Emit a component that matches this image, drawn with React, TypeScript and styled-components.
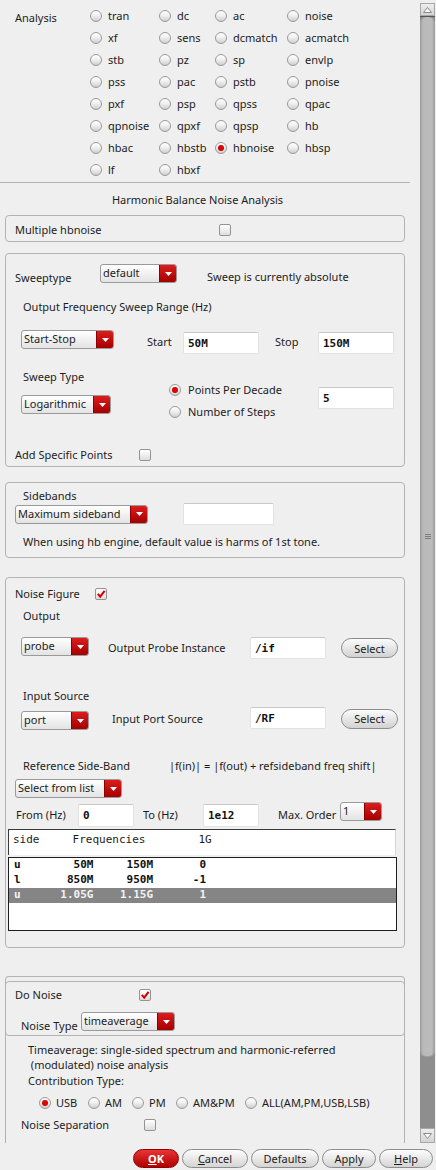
import React from 'react'
import styled, { createGlobalStyle } from 'styled-components'

const GlobalStyle = createGlobalStyle`
  html, body {
    margin: 0;
    padding: 0;
    background: #efefef;
  }
  body {
    font-family: "Noto Sans", "DejaVu Sans", sans-serif;
    font-size: 11px;
    line-height: 14px;
    color: #1c1c1c;
  }
  * {
    box-sizing: border-box;
  }
`

const Window = styled.div`
  width: 436px;
  height: 1170px;
  display: flex;
  flex-direction: column;
  background: #efefef;
  overflow: hidden;
`

const MainRow = styled.div`
  display: flex;
  height: 1143px;
  flex-shrink: 0;
`

const Panel = styled.div`
  width: 420px;
  height: 100%;
  overflow: hidden;
`

/* scrollbar */

const Scrollbar = styled.div`
  width: 15px;
  padding-top: 3px;
  display: flex;
  flex-direction: column;
`

const ScrollArrow = styled.div<{ $h: number }>`
  height: ${p => p.$h}px;
  flex-shrink: 0;
  background: linear-gradient(#ededed, #d4d4d4);
  border: 1px solid #a8a8a8;
  display: flex;
  align-items: center;
  justify-content: center;
`

const ScrollTrack = styled.div`
  flex: 1;
  background: #8e8e8e;
  border-top: 1px solid #555;
`

const ScrollThumb = styled.div`
  height: 1040px;
  background: linear-gradient(90deg, #a9a9a9, #bababa 20%, #bcbcbc 80%, #a9a9a9);
  border: 1px solid #9e9e9e;
  border-top: none;
  border-radius: 6px;
  display: flex;
  align-items: center;
  justify-content: center;
`

const Grip = styled.div`
  width: 6px;
  height: 5px;
  background: repeating-linear-gradient(#7c7c7c 0 1px, transparent 1px 2px);
`

/* analysis chooser */

const AnalysisSection = styled.div`
  display: flex;
  height: 181px;
  padding-top: 5px;
`

const AnalysisLabel = styled.div`
  width: 90px;
  padding: 6px 0 0 15px;
  flex-shrink: 0;
`

const RadioGrid = styled.div`
  display: grid;
  grid-template-columns: 69px 56px 72px 100px;
  grid-auto-rows: 22px;
`

const RadioOption = styled.label<{ $w?: number; $gap?: number }>`
  display: flex;
  align-items: center;
  gap: ${p => p.$gap ?? 6}px;
  height: 22px;
  white-space: nowrap;
  flex-shrink: 0;
  width: ${p => (p.$w ? `${p.$w}px` : 'auto')};
`

const RadioCircle = styled.span<{ $checked?: boolean }>`
  width: 12px;
  height: 12px;
  border-radius: 50%;
  border: 1px solid #9a9a9a;
  background: linear-gradient(#ffffff, #f0f0f0 45%, #cfcfcf);
  flex-shrink: 0;
  display: flex;
  align-items: center;
  justify-content: center;

  &::after {
    content: '';
    display: ${p => (p.$checked ? 'block' : 'none')};
    width: 6px;
    height: 6px;
    border-radius: 50%;
    background: radial-gradient(#e60000 40%, #a40000);
  }
`

const Separator = styled.div`
  margin-top: 1px;
  width: 410px;
  height: 1px;
  background: #b4b4b4;
`

const Title = styled.div`
  margin-top: 10px;
  width: 395px;
  text-align: center;
`

/* group boxes and rows */

const GroupBox = styled.div<{ $mt: number; $pb?: number }>`
  margin: ${p => p.$mt}px 0 0 5px;
  width: 400px;
  border: 1px solid #b3b3b3;
  border-radius: 4px;
  padding-bottom: ${p => p.$pb ?? 0}px;
`

const OpenBox = styled.div<{ $mt: number }>`
  margin: ${p => p.$mt}px 0 0 5px;
  width: 400px;
  border: 1px solid #b3b3b3;
  border-bottom: none;
  border-radius: 4px 4px 0 0;
  padding-bottom: 30px;
`

const InnerBox = styled.div`
  margin: 4px -1px 0;
  border: 1px solid #b3b3b3;
  border-radius: 4px;
  padding-bottom: 4px;
`

const Row = styled.div<{ $mt?: number; $h?: number; $pl?: number; $align?: string }>`
  display: flex;
  align-items: ${p => p.$align ?? 'center'};
  margin-top: ${p => p.$mt ?? 0}px;
  height: ${p => (p.$h ? `${p.$h}px` : 'auto')};
  padding-left: ${p => p.$pl ?? 0}px;
`

const Column = styled.div<{ $w?: number; $mt?: number }>`
  display: flex;
  flex-direction: column;
  align-items: flex-start;
  width: ${p => (p.$w ? `${p.$w}px` : 'auto')};
  margin-top: ${p => p.$mt ?? 0}px;
  flex-shrink: 0;
`

const Label = styled.span<{ $w?: number; $ml?: number; $mt?: number }>`
  flex-shrink: 0;
  white-space: nowrap;
  width: ${p => (p.$w ? `${p.$w}px` : 'auto')};
  margin-left: ${p => p.$ml ?? 0}px;
  margin-top: ${p => p.$mt ?? 0}px;
`

const Caption = styled.div<{ $mt?: number; $pl?: number; $lh?: number }>`
  margin-top: ${p => p.$mt ?? 0}px;
  padding-left: ${p => p.$pl ?? 0}px;
  line-height: ${p => p.$lh ?? 14}px;
  white-space: pre;
`

/* widgets */

const CheckBoxBox = styled.span`
  width: 12px;
  height: 12px;
  flex-shrink: 0;
  border: 1px solid #939393;
  border-radius: 2px;
  background: linear-gradient(#ffffff, #dddddd);
  display: flex;
  align-items: center;
  justify-content: center;
`

const ComboBox = styled.div<{ $w: number; $self?: string; $mt?: number }>`
  width: ${p => p.$w}px;
  height: 19px;
  flex-shrink: 0;
  display: flex;
  align-self: ${p => p.$self ?? 'auto'};
  margin-top: ${p => p.$mt ?? 0}px;
  border: 1px solid #9a9a9a;
  border-radius: 3px;
  background: linear-gradient(#ffffff, #e3e3e3);
  overflow: hidden;
`

const ComboText = styled.span`
  flex: 1;
  padding-left: 2px;
  line-height: 15px;
  white-space: nowrap;
  overflow: hidden;
`

const ComboArrow = styled.span`
  width: 17px;
  flex-shrink: 0;
  background: linear-gradient(#dc1d1d, #a50000);
  border-left: 1px solid #8c0000;
  display: flex;
  align-items: center;
  justify-content: center;
`

const TextField = styled.input<{ $w: number; $h?: number; $self?: string; $ml?: number; $mt?: number }>`
  width: ${p => p.$w}px;
  height: ${p => p.$h ?? 22}px;
  flex-shrink: 0;
  align-self: ${p => p.$self ?? 'auto'};
  margin: ${p => p.$mt ?? 0}px 0 0 ${p => p.$ml ?? 0}px;
  padding: 0 0 0 4px;
  border: 1px solid #e2e2e2;
  border-top-color: #c8c8c8;
  border-radius: 2px;
  background: #fff;
  font: bold 11px "DejaVu Sans Mono", monospace;
  color: #111;
  outline: none;
`

const SelectButton = styled.button`
  width: 57px;
  height: 20px;
  margin-left: 15px;
  padding: 0;
  flex-shrink: 0;
  border: 1px solid #8d8d8d;
  border-radius: 10px;
  background: linear-gradient(#fbfbfb, #d2d2d2);
  font: 11px "Noto Sans", sans-serif;
  color: #1c1c1c;
`

const TableHeader = styled.div`
  margin: 2px 0 0 2px;
  width: 388px;
  height: 26px;
  padding: 2px 0 0 4px;
  background: #fff;
  border-top: 1px solid #3a3a3a;
  border-left: 1px solid #3a3a3a;
  border-right: 1px solid #d4d4d4;
  font: 11px "DejaVu Sans Mono", monospace;
  line-height: 15px;
  white-space: pre;
`

const ListBox = styled.div`
  margin: 2px 0 0 2px;
  width: 389px;
  height: 74px;
  background: #fff;
  border: 1px solid #1e1e1e;
`

const ListRow = styled.div<{ $selected?: boolean }>`
  height: 15px;
  line-height: 15px;
  padding-left: 5px;
  white-space: pre;
  font: bold 11px "DejaVu Sans Mono", monospace;
  background: ${p => (p.$selected ? '#858585' : 'transparent')};
  color: ${p => (p.$selected ? '#f2f2f2' : '#111')};
`

/* dialog buttons */

const ButtonBar = styled.div`
  flex: 1;
  display: flex;
  justify-content: flex-end;
  align-items: flex-start;
  gap: 3px;
  padding: 6px 3px 0 0;
`

const DialogButton = styled.button<{ $w: number; $primary?: boolean }>`
  width: ${p => p.$w}px;
  height: 19px;
  padding: 0;
  border-radius: 10px;
  border: 1px solid ${p => (p.$primary ? '#8a0000' : '#8c8c8c')};
  background: ${p =>
    p.$primary ? 'linear-gradient(#e83434, #b00000)' : 'linear-gradient(#fdfdfd, #d4d4d4)'};
  color: ${p => (p.$primary ? '#fff' : '#1c1c1c')};
  font-family: "Noto Sans", sans-serif;
  font-size: 11px;
  font-weight: ${p => (p.$primary ? 700 : 400)};
  line-height: 17px;
`

function Radio({ label, checked, w, gap }: { label: string; checked?: boolean; w?: number; gap?: number }) {
  return (
    <RadioOption $w={w} $gap={gap}>
      <RadioCircle $checked={checked} />
      {label}
    </RadioOption>
  )
}

function Check({ checked }: { checked?: boolean }) {
  return (
    <CheckBoxBox>
      {checked && (
        <svg width="10" height="10" viewBox="0 0 10 10">
          <path d="M1.8 4.8 L4.2 7.6 L8.6 1.8" fill="none" stroke="#d00000" strokeWidth="2" />
        </svg>
      )}
    </CheckBoxBox>
  )
}

function Combo({ value, w, self, mt }: { value: string; w: number; self?: string; mt?: number }) {
  return (
    <ComboBox $w={w} $self={self} $mt={mt}>
      <ComboText>{value}</ComboText>
      <ComboArrow>
        <svg width="7" height="4" viewBox="0 0 7 4">
          <polygon points="0,0 7,0 3.5,4" fill="#fff" />
        </svg>
      </ComboArrow>
    </ComboBox>
  )
}

const analyses = [
  ['tran', 'dc', 'ac', 'noise'],
  ['xf', 'sens', 'dcmatch', 'acmatch'],
  ['stb', 'pz', 'sp', 'envlp'],
  ['pss', 'pac', 'pstb', 'pnoise'],
  ['pxf', 'psp', 'qpss', 'qpac'],
  ['qpnoise', 'qpxf', 'qpsp', 'hb'],
  ['hbac', 'hbstb', 'hbnoise', 'hbsp'],
  ['lf', 'hbxf'],
].flat()

const sideRows = [
  { text: 'u        50M     150M       0' },
  { text: 'l       850M     950M      -1' },
  { text: 'u      1.05G    1.15G       1', selected: true },
]

export default function App() {
  return (
    <Window>
      <GlobalStyle />
      <MainRow>
        <Panel>
          <AnalysisSection>
            <AnalysisLabel>Analysis</AnalysisLabel>
            <RadioGrid>
              {analyses.map(a => (
                <Radio key={a} label={a} checked={a === 'hbnoise'} />
              ))}
            </RadioGrid>
          </AnalysisSection>
          <Separator />
          <Title>Harmonic Balance Noise Analysis</Title>

          <GroupBox $mt={8}>
            <Row $mt={2} $h={23} $pl={9}>
              <Label $w={204}>Multiple hbnoise</Label>
              <Check />
            </Row>
          </GroupBox>

          <GroupBox $mt={11} $pb={4}>
            <Row $mt={10} $h={19} $pl={9}>
              <Label $w={85} $mt={8}>Sweeptype</Label>
              <Combo value="default" w={77} />
              <Label $ml={30} $mt={6}>Sweep is currently absolute</Label>
            </Row>
            <Caption $mt={17} $pl={17}>Output Frequency Sweep Range (Hz)</Caption>
            <Row $mt={16} $h={24} $pl={15}>
              <Combo value="Start-Stop" w={93} self="flex-start" />
              <Label $ml={33} $w={36}>Start</Label>
              <TextField $w={76} $self="flex-end" defaultValue="50M" readOnly />
              <Label $ml={16} $w={43}>Stop</Label>
              <TextField $w={76} $self="flex-end" defaultValue="150M" readOnly />
            </Row>
            <Row $mt={16} $pl={15} $align="flex-start">
              <Column $w={148}>
                <Caption $pl={2}>Sweep Type</Caption>
                <Combo value="Logarithmic" w={90} mt={11} />
              </Column>
              <Column $w={149} $mt={9}>
                <Radio label="Points Per Decade" checked gap={7} />
                <Radio label="Number of Steps" gap={7} />
              </Column>
              <TextField $w={76} $mt={17} defaultValue="5" readOnly />
            </Row>
            <Row $mt={25} $h={14} $pl={9}>
              <Label $w={124}>Add Specific Points</Label>
              <Check />
            </Row>
          </GroupBox>

          <GroupBox $mt={15} $pb={8}>
            <Caption $mt={6} $pl={17}>Sidebands</Caption>
            <Row $h={22} $pl={9}>
              <Combo value="Maximum sideband" w={133} />
              <TextField $w={91} $ml={35} defaultValue="" readOnly />
            </Row>
            <Caption $mt={10} $pl={17}>When using hb engine, default value is harms of 1st tone.</Caption>
          </GroupBox>

          <GroupBox $mt={19} $pb={16}>
            <Row $mt={9} $h={14} $pl={9}>
              <Label $w={80}>Noise Figure</Label>
              <Check checked />
            </Row>
            <Caption $mt={8} $pl={17}>Output</Caption>
            <Row $mt={14} $h={22} $pl={15}>
              <Combo value="probe" w={68} self="flex-start" />
              <Label $ml={19} $w={142}>Output Probe Instance</Label>
              <TextField $w={76} defaultValue="/if" readOnly />
              <SelectButton>Select</SelectButton>
            </Row>
            <Caption $mt={30} $pl={17}>Input Source</Caption>
            <Row $mt={4} $h={23} $pl={15}>
              <Combo value="port" w={68} self="flex-end" />
              <Label $ml={23} $w={138}>Input Port Source</Label>
              <TextField $w={76} $self="flex-start" defaultValue="/RF" readOnly />
              <SelectButton>Select</SelectButton>
            </Row>
            <Row $mt={29} $h={14} $pl={17}>
              <Label $w={146}>Reference Side-Band</Label>
              <Label>|f(in)| = |f(out) + refsideband freq shift|</Label>
            </Row>
            <Row $mt={6} $h={19} $pl={9}>
              <Combo value="Select from list" w={107} />
            </Row>
            <Row $mt={4} $h={25} $pl={10}>
              <Label $w={62}>From (Hz)</Label>
              <TextField $w={56} $h={23} $self="flex-end" defaultValue="0" readOnly />
              <Label $ml={9} $w={60}>To (Hz)</Label>
              <TextField $w={56} $h={23} $self="flex-end" defaultValue="1e12" readOnly />
              <Label $ml={19} $w={62}>Max. Order</Label>
              <Combo value="1" w={42} self="flex-start" />
            </Row>
            <TableHeader>{'side     Frequencies        1G'}</TableHeader>
            <ListBox>
              {sideRows.map(r => (
                <ListRow key={r.text} $selected={r.selected}>
                  {r.text}
                </ListRow>
              ))}
            </ListBox>
          </GroupBox>

          <OpenBox $mt={28}>
            <InnerBox>
              <Row $mt={6} $h={14} $pl={9}>
                <Label $w={124}>Do Noise</Label>
                <Check checked />
              </Row>
              <Row $mt={10} $h={19} $pl={15}>
                <Label $w={60} $mt={9}>Noise Type</Label>
                <Combo value="timeaverage" w={94} />
              </Row>
            </InnerBox>
            <Caption $mt={6} $pl={22} $lh={15}>
              {'Timeaverage: single-sided spectrum and harmonic-referred\n (modulated) noise analysis'}
            </Caption>
            <Caption $mt={2} $pl={22}>Contribution Type:</Caption>
            <Row $mt={4} $h={22} $pl={33}>
              <Radio label="USB" checked w={49} gap={5} />
              <Radio label="AM" w={44} gap={5} />
              <Radio label="PM" w={44} gap={5} />
              <Radio label="AM&PM" w={69} gap={5} />
              <Radio label="ALL(AM,PM,USB,LSB)" gap={5} />
            </Row>
            <Row $mt={4} $h={14} $pl={15}>
              <Label $w={123}>Noise Separation</Label>
              <Check />
            </Row>
          </OpenBox>
        </Panel>

        <Scrollbar>
          <ScrollArrow $h={13}>
            <svg width="9" height="6" viewBox="0 0 9 6">
              <polygon points="0.5,5.5 4.5,0.5 8.5,5.5" fill="#f8f8f8" stroke="#8c8c8c" />
            </svg>
          </ScrollArrow>
          <ScrollTrack>
            <ScrollThumb>
              <Grip />
            </ScrollThumb>
          </ScrollTrack>
          <ScrollArrow $h={15}>
            <svg width="9" height="6" viewBox="0 0 9 6">
              <polygon points="0.5,0.5 8.5,0.5 4.5,5.5" fill="#f8f8f8" stroke="#8c8c8c" />
            </svg>
          </ScrollArrow>
        </Scrollbar>
      </MainRow>

      <ButtonBar>
        <DialogButton $w={46} $primary>
          <u>O</u>K
        </DialogButton>
        <DialogButton $w={66}>
          <u>C</u>ancel
        </DialogButton>
        <DialogButton $w={68}>Defaults</DialogButton>
        <DialogButton $w={54}>Apply</DialogButton>
        <DialogButton $w={54}>
          <u>H</u>elp
        </DialogButton>
      </ButtonBar>
    </Window>
  )
}
